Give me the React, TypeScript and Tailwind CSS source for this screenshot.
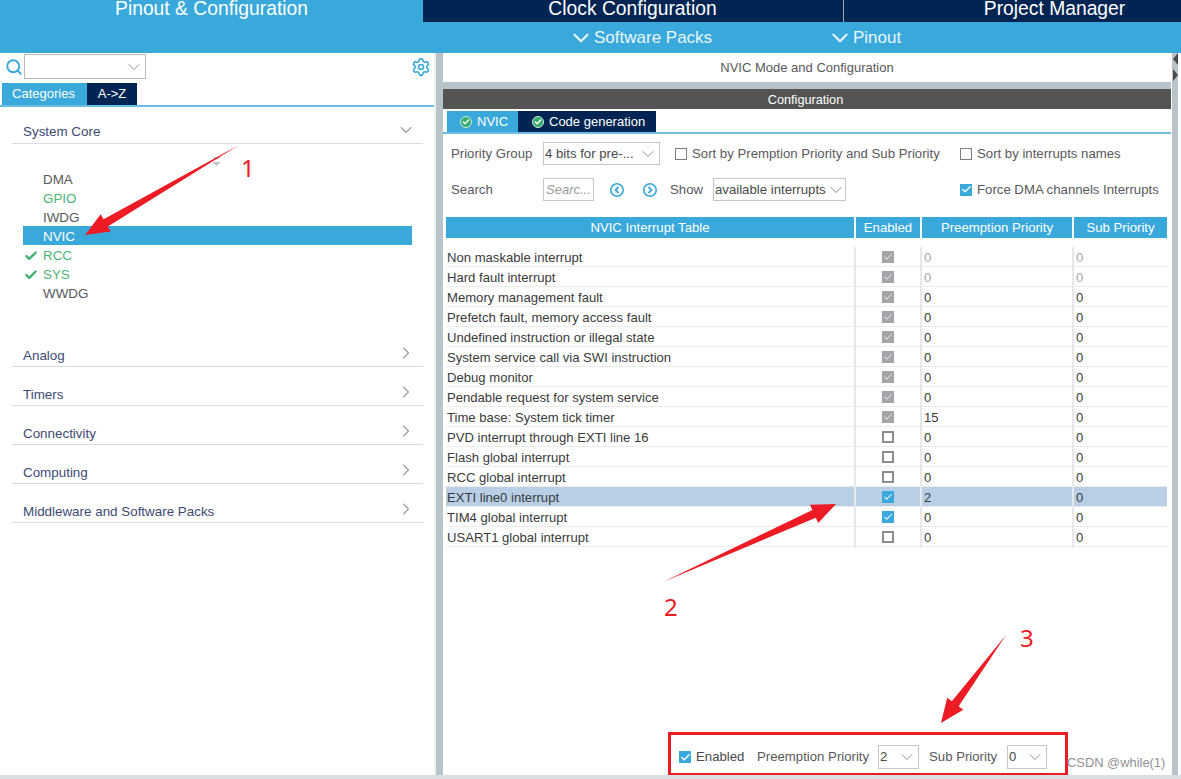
import { ChevronDown, ChevronRight, Search, Settings, Check } from 'lucide-react'

const rows = [
  { name: 'Non maskable interrupt', state: 'locked', pre: '0', sub: '0', muted: true },
  { name: 'Hard fault interrupt', state: 'locked', pre: '0', sub: '0', muted: true },
  { name: 'Memory management fault', state: 'locked', pre: '0', sub: '0' },
  { name: 'Prefetch fault, memory access fault', state: 'locked', pre: '0', sub: '0' },
  { name: 'Undefined instruction or illegal state', state: 'locked', pre: '0', sub: '0' },
  { name: 'System service call via SWI instruction', state: 'locked', pre: '0', sub: '0' },
  { name: 'Debug monitor', state: 'locked', pre: '0', sub: '0' },
  { name: 'Pendable request for system service', state: 'locked', pre: '0', sub: '0' },
  { name: 'Time base: System tick timer', state: 'locked', pre: '15', sub: '0' },
  { name: 'PVD interrupt through EXTI line 16', state: 'off', pre: '0', sub: '0' },
  { name: 'Flash global interrupt', state: 'off', pre: '0', sub: '0' },
  { name: 'RCC global interrupt', state: 'off', pre: '0', sub: '0' },
  { name: 'EXTI line0 interrupt', state: 'on', pre: '2', sub: '0', selected: true },
  { name: 'TIM4 global interrupt', state: 'on', pre: '0', sub: '0' },
  { name: 'USART1 global interrupt', state: 'off', pre: '0', sub: '0' },
]

const peripherals = [
  { name: 'DMA', color: 'text-[#58595b]' },
  { name: 'GPIO', color: 'text-[#4cb573]' },
  { name: 'IWDG', color: 'text-[#58595b]' },
  { name: 'NVIC', color: 'text-white', selected: true },
  { name: 'RCC', color: 'text-[#4cb573]', ok: true },
  { name: 'SYS', color: 'text-[#4cb573]', ok: true },
  { name: 'WWDG', color: 'text-[#58595b]' },
]

function CheckBox({ state }: { state: string }) {
  if (state === 'off') {
    return <span className="block h-3 w-3 border-2 border-[#8f8f8f] bg-white" />
  }
  return (
    <span className={`flex h-3 w-3 items-center justify-center ${state === 'on' ? 'bg-[#39a9dc]' : 'bg-[#a3a5a8]'}`}>
      <Check size={10} strokeWidth={2.5} className={state === 'on' ? 'text-white' : 'text-[#dcdcdc]'} />
    </span>
  )
}

function Select({ label, className }: { label: string; className: string }) {
  return (
    <div className={`flex shrink-0 items-center justify-between border border-[#c4c6c8] bg-white pl-[1px] pr-[1px] text-[13.2px] text-[#4a4a4a] ${className}`}>
      <span className="whitespace-nowrap">{label}</span>
      <ChevronDown size={20} strokeWidth={1} className="shrink-0 text-[#77797c]" />
    </div>
  )
}

function Section({ title }: { title: string }) {
  return (
    <div className="ml-3 mr-[11px] mt-[11px] flex h-[28px] items-center justify-between border-b border-[#d5dde3] pl-[11px] pr-[7px] text-[13.4px] text-[#3d4a75]">
      <span className="pt-[8px]">{title}</span>
      <ChevronRight size={20} strokeWidth={1.25} className="text-[#77797c]" />
    </div>
  )
}

function TabBadge() {
  return (
    <span className="flex h-3 w-3 shrink-0 items-center justify-center rounded-full border border-[#cfe9da] bg-[#35ad6c]">
      <Check size={8} strokeWidth={4} className="text-white" />
    </span>
  )
}

function Arrow({ x1, y1, x2, y2, w = 10 }: { x1: number; y1: number; x2: number; y2: number; w?: number }) {
  const dx = x2 - x1
  const dy = y2 - y1
  const len = Math.hypot(dx, dy)
  const ux = dx / len
  const uy = dy / len
  const nx = -uy
  const ny = ux
  const head = 24
  const bx = x2 - ux * head
  const by = y2 - uy * head
  const pts = [
    [x1, y1],
    [bx + nx * w * 0.42, by + ny * w * 0.42],
    [bx + nx * w, by + ny * w],
    [x2, y2],
    [bx - nx * w, by - ny * w],
    [bx - nx * w * 0.42, by - ny * w * 0.42],
  ]
  return <polygon points={pts.map((p) => p.join(',')).join(' ')} fill="#ed1c24" />
}

export default function App() {
  return (
    <div className="relative flex h-[779px] w-[1181px] flex-col overflow-hidden bg-white font-['Liberation_Sans',Arial,sans-serif]">
      {/* top menu */}
      <div className="h-[53px] shrink-0 bg-[#39a9dc] text-white">
        <div className="flex h-[22px] text-[19.3px] leading-[17px]">
          <div className="flex w-[423px] justify-center">Pinout &amp; Configuration</div>
          <div className="flex w-[420px] justify-center bg-[#002552] pr-[1px]">Clock Configuration</div>
          <div className="flex flex-1 justify-center border-l border-[#9aa5b4] bg-[#002552] pl-[84px]">Project Manager</div>
        </div>
        <div className="flex h-[31px] items-center text-[17px] text-[#eaf6fb]">
          <div className="ml-[568px] flex w-[259px] items-center">
            <ChevronDown size={26} strokeWidth={2} />
            <span className="pt-[1px]">Software Packs</span>
          </div>
          <div className="flex items-center">
            <ChevronDown size={26} strokeWidth={2} />
            <span className="pt-[1px]">Pinout</span>
          </div>
        </div>
      </div>

      <div className="flex min-h-0 flex-1">
        {/* left panel */}
        <div className="w-[436px] shrink-0 border-r-[2px] border-[#edf0f2]">
          <div className="flex h-[30px] items-center pb-[3px] pl-[5px] pr-[3px]">
            <Search size={18} strokeWidth={2.5} className="text-[#39a9dc]" />
            <div className="ml-[1px] flex h-[25px] w-[122px] items-center justify-end border border-[#b9bbbd] pr-[1px]">
              <ChevronDown size={20} strokeWidth={1} className="text-[#77797c]" />
            </div>
            <Settings size={20} strokeWidth={2} className="ml-auto text-[#39a9dc]" />
          </div>
          <div className="flex h-[24px] border-b-[2px] border-[#6cbde4] pl-[2px] text-[13px] text-white">
            <div className="flex w-[85px] items-center justify-center bg-[#39a9dc] pr-[2px]">Categories</div>
            <div className="flex w-[50px] items-center justify-center bg-[#002552]">A-&gt;Z</div>
          </div>

          <div className="ml-3 mr-[11px] mt-[9px] flex h-[28px] items-center justify-between border-b border-[#d5dde3] pl-[11px] pr-[7px] text-[13.4px] text-[#3d4a75]">
            <span className="pt-[5px]">System Core</span>
            <ChevronDown size={20} strokeWidth={1.25} className="text-[#77797c]" />
          </div>

          <div className="ml-[23px] mr-[22px] mt-[25px]">
            {peripherals.map((p) => (
              <div
                key={p.name}
                className={`relative flex h-[19px] items-center pl-[20px] pt-[3px] text-[13.4px] ${p.color} ${p.selected ? 'bg-[#39a9dc]' : ''}`}
              >
                {p.ok && (
                  <Check size={14} strokeWidth={4} className="absolute left-[1px] text-[#3fae6e]" />
                )}
                {p.name}
              </div>
            ))}
          </div>

          <div className="mt-[37px]">
            <Section title="Analog" />
          </div>
          <Section title="Timers" />
          <Section title="Connectivity" />
          <Section title="Computing" />
          <Section title="Middleware and Software Packs" />
        </div>

        {/* divider */}
        <div className="w-[7px] shrink-0 bg-[#b8c4ca]" />

        {/* right panel */}
        <div className="flex w-[728px] shrink-0 flex-col">
          <div className="flex h-[29px] shrink-0 items-center justify-center text-[13px] text-[#58595b]">
            NVIC Mode and Configuration
          </div>
          <div className="h-[7px] shrink-0 bg-[#b8c4ca]" />
          <div className="flex h-[20px] shrink-0 items-center justify-center bg-[#535453] pr-[3px] pt-[3px] text-[12.7px] text-white">
            Configuration
          </div>

          <div className="mt-[2px] flex h-[23px] shrink-0 border-b-[2px] border-[#6cbde4] pl-[4px] text-[13px] text-white">
            <div className="flex w-[71px] items-center gap-[5px] bg-[#39a9dc] pl-[13px]">
              <TabBadge />
              NVIC
            </div>
            <div className="flex w-[138px] items-center gap-[5px] whitespace-nowrap bg-[#002552] pl-[14px]">
              <TabBadge />
              Code generation
            </div>
          </div>

          {/* filters */}
          <div className="mt-[8px] flex h-[23px] shrink-0 items-center text-[13.2px] text-[#58595b]">
            <span className="ml-[8px] w-[92px] shrink-0">Priority Group</span>
            <Select label="4 bits for pre-..." className="h-[23px] w-[117px]" />
            <span className="ml-[15px] h-3 w-3 shrink-0 border border-[#7d7d7d]" />
            <span className="ml-[5px] w-[268px] shrink-0 whitespace-nowrap">Sort by Premption Priority and Sub Priority</span>
            <span className="h-3 w-3 shrink-0 border border-[#7d7d7d]" />
            <span className="ml-[5px] whitespace-nowrap">Sort by interrupts names</span>
          </div>
          <div className="mt-[13px] flex h-[23px] shrink-0 items-center text-[13.2px] text-[#58595b]">
            <span className="ml-[8px] w-[92px] shrink-0">Search</span>
            <div className="flex h-[23px] w-[51px] shrink-0 items-center border border-[#c4c6c8] pl-[2px] text-[13px] italic text-[#9a9a9a]">Searc...</div>
            <svg viewBox="0 0 16 16" className="ml-[15px] h-[16px] w-[16px] text-[#39a9dc]" fill="none" stroke="currentColor">
              <circle cx="8" cy="8" r="6.2" strokeWidth="1.6" />
              <path d="M9.5 5 6.500 8l3 3" strokeWidth="1.8" />
            </svg>
            <svg viewBox="0 0 16 16" className="ml-[17px] h-[16px] w-[16px] text-[#39a9dc]" fill="none" stroke="currentColor">
              <circle cx="8" cy="8" r="6.2" strokeWidth="1.6" />
              <path d="M6.500 5l3 3-3 3" strokeWidth="1.8" />
            </svg>
            <span className="ml-[12px] w-[43px] shrink-0">Show</span>
            <Select label="available interrupts" className="h-[23px] w-[133px]" />
            <span className="ml-[114px] flex h-3 w-3 shrink-0 items-center justify-center bg-[#39a9dc]">
              <Check size={11} strokeWidth={3} className="text-white" />
            </span>
            <span className="ml-[5px] whitespace-nowrap">Force DMA channels Interrupts</span>
          </div>

          {/* table */}
          <div className="ml-[3px] mt-[16px] w-[721px] shrink-0">
            <div className="grid h-[20px] grid-cols-[410px_66px_152px_93px] text-[13.2px] text-white">
              <div className="flex items-center justify-center border-r-[2px] border-white bg-[#39a9dc] pt-[1px]">NVIC Interrupt Table</div>
              <div className="flex items-center justify-center border-r-[2px] border-white bg-[#39a9dc] pt-[1px]">Enabled</div>
              <div className="flex items-center justify-center border-r-[2px] border-white bg-[#39a9dc] pt-[1px]">Preemption Priority</div>
              <div className="flex items-center justify-center bg-[#39a9dc] pt-[1px]">Sub Priority</div>
            </div>
            <div className="mt-[10px]">
              {rows.map((r) => (
                <div
                  key={r.name}
                  className={`grid h-[20px] grid-cols-[410px_66px_152px_93px] border-b border-[#eaecee] text-[13.1px] ${r.selected ? 'bg-[#b8cfe5]' : ''}`}
                >
                  <div className="flex items-center whitespace-nowrap border-r-[2px] border-[#e6e8ea] pl-[1px] pt-[1px] text-[#3a3a3a]">{r.name}</div>
                  <div className="flex items-center justify-center border-r-[2px] border-[#e6e8ea]">
                    <CheckBox state={r.state} />
                  </div>
                  <div className={`flex items-center border-r-[2px] border-[#e6e8ea] pl-[2px] pt-[1px] ${r.muted ? 'text-[#a5a7a9]' : 'text-[#3a3a3a]'}`}>{r.pre}</div>
                  <div className={`flex items-center pl-[2px] pt-[1px] ${r.muted ? 'text-[#a5a7a9]' : 'text-[#3a3a3a]'}`}>{r.sub}</div>
                </div>
              ))}
            </div>
          </div>

          {/* selected interrupt settings */}
          <div className="mb-[-1px] ml-[225px] mt-auto flex h-[44px] w-[400px] shrink-0 items-center border-[3px] border-[#ed1c24] bg-white pl-[8px] pt-[6px] text-[13.2px] text-[#58595b]">
            <span className="flex h-3 w-3 shrink-0 items-center justify-center bg-[#39a9dc]">
              <Check size={11} strokeWidth={3} className="text-white" />
            </span>
            <span className="ml-[5px] w-[48px] shrink-0 text-[#4a4a4a]">Enabled</span>
            <span className="ml-[13px] w-[112px] shrink-0 whitespace-nowrap">Preemption Priority</span>
            <Select label="2" className="ml-[9px] h-[24px] w-[41px]" />
            <span className="ml-[10px] w-[68px] shrink-0 whitespace-nowrap">Sub Priority</span>
            <Select label="0" className="ml-[10px] h-[24px] w-[40px]" />
          </div>
        </div>

        {/* right rail */}
        <div className="relative ml-[1px] w-[6px] shrink-0 bg-[#b8c4ca]">
          <span className="absolute left-[1px] top-0 h-0 w-0 border-y-[6px] border-r-[5px] border-y-transparent border-r-[#4a4a4a]" />
          <span className="absolute left-[1px] top-[16px] h-0 w-0 border-y-[6px] border-l-[5px] border-y-transparent border-l-[#4a4a4a]" />
        </div>
      </div>
      <div className="h-[4px] shrink-0 bg-[#d9dfe3]" />

      {/* annotations */}
      <svg viewBox="0 0 1181 779" className="pointer-events-none absolute left-0 top-0 h-[779px] w-[1181px]">
        <path d="M212 157h9l-4.500 3zM212 162h9l-4.500 4z" fill="#c4c6c8" />
        <Arrow x1={239} y1={145} x2={85} y2={235} w={10} />
        <Arrow x1={663} y1={582} x2={836} y2={504} w={10} />
        <Arrow x1={1006} y1={635} x2={941} y2={723} w={10} />
      </svg>
      <span className="absolute left-[241px] top-[152px] font-['Noto_Sans',sans-serif] text-[24px] leading-[32px] text-[#ed1c24]">1</span>
      <span className="absolute left-[664px] top-[591px] font-['Noto_Sans',sans-serif] text-[24px] leading-[32px] text-[#ed1c24]">2</span>
      <span className="absolute left-[1020px] top-[622px] font-['Noto_Sans',sans-serif] text-[24px] leading-[32px] text-[#ed1c24]">3</span>
      <span className="absolute left-[1067px] top-[755px] text-[12.9px] leading-[15px] text-[#8f9092]">CSDN @while(1)</span>
    </div>
  )
}
